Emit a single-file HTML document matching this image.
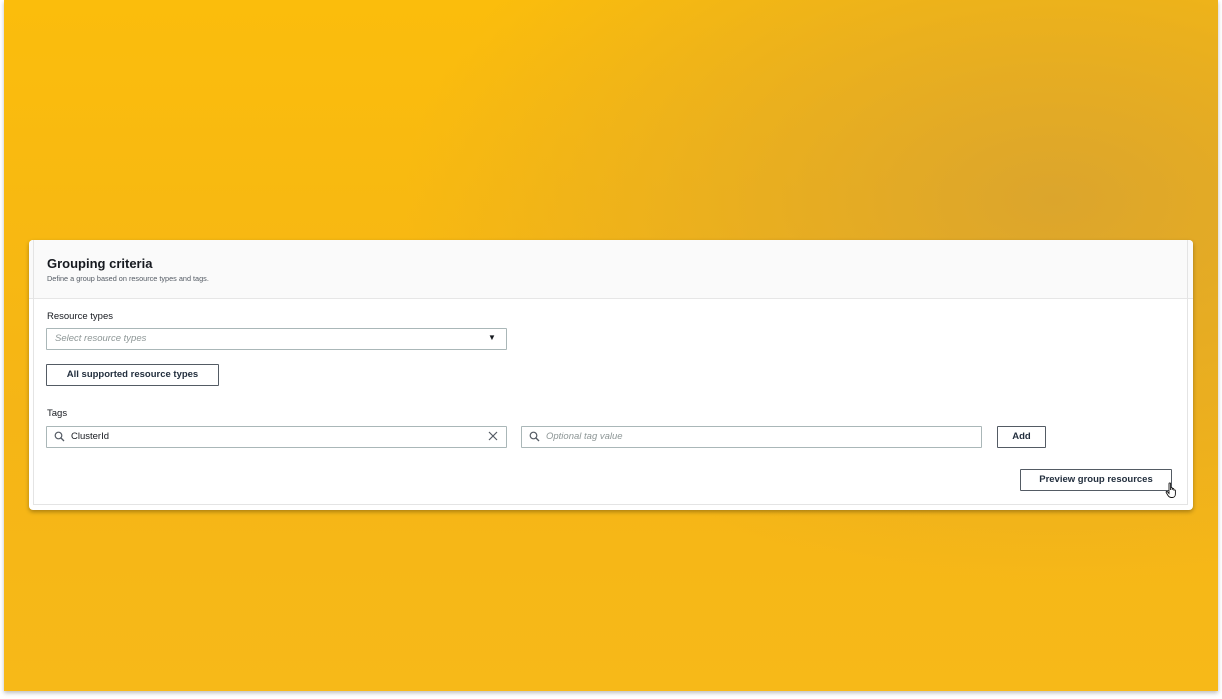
<!DOCTYPE html><html><head><style>
body{margin:0;width:1222px;height:699px;background:#fff;position:relative;overflow:hidden;font-family:"Liberation Sans",sans-serif;color:#16191f}
.bg{position:absolute;left:4px;top:0;width:1214px;height:691px;background:radial-gradient(ellipse 650px 380px at 1050px 200px,rgba(218,164,46,.95),rgba(220,167,46,0) 100%),linear-gradient(180deg,#fbbd0c 0%,#f5b516 60%,#f7b918 100%);box-shadow:0 2px 4px rgba(0,0,0,.25)}
.card{position:absolute;left:29px;top:240px;width:1164px;height:270px;background:#fff;border-radius:4px;box-shadow:0 2px 4px rgba(0,0,0,.3)}
.in{position:absolute;left:4px;top:0;right:5px;bottom:5px;border:1px solid #e4e4e4;border-top:none}
.hd{position:absolute;left:0;top:0;right:0;height:58px;background:#fafafa;border-bottom:1px solid #e6e6e6;border-radius:4px 4px 0 0}
.a{position:absolute;white-space:nowrap}
.box{position:absolute;border:1px solid #aab7b8;height:19px;box-sizing:border-box;background:#fff;border-radius:1px}
.btn{position:absolute;border:1px solid #545b64;box-sizing:border-box;height:21px;background:#fff;font-weight:bold;font-size:9.5px;text-align:center;line-height:19px;border-radius:1px;color:#232f3e}
.ph{font-style:italic;color:#8d9696;font-size:9.5px}
</style></head><body>
<div class="bg"></div>
<div class="card"><div class="hd"></div><div class="in"></div></div>
<div class="a" style="left:47px;top:256px;font-size:13px;font-weight:bold">Grouping criteria</div>
<div class="a" style="left:47px;top:274px;font-size:7.3px;color:#545b64">Define a group based on resource types and tags.</div>
<div class="a" style="left:47px;top:311px;font-size:9.5px">Resource types</div>
<div class="box" style="left:46px;top:328px;width:461px;height:22px"></div>
<div class="a ph" style="left:55px;top:333px">Select resource types</div>
<div class="a" style="left:488px;top:333px;font-size:8px">▼</div>
<div class="btn" style="left:46px;top:364px;width:173px;height:22px;line-height:20px">All supported resource types</div>
<div class="a" style="left:47px;top:408px;font-size:9.5px">Tags</div>
<div class="box" style="left:46px;top:426px;width:461px;height:22px"></div>
<svg class="a" style="left:54px;top:431px" width="11" height="11" viewBox="0 0 11 11"><circle cx="4.5" cy="4.5" r="3.3" fill="none" stroke="#545b64" stroke-width="1.2"/><path d="M7 7l3 3" stroke="#545b64" stroke-width="1.3"/></svg>
<div class="a" style="left:71px;top:431px;font-size:9.5px">ClusterId</div>
<svg class="a" style="left:488px;top:431px" width="10" height="10"><path d="M1 1l8 8M9 1l-8 8" stroke="#545b64" stroke-width="1.2"/></svg>
<div class="box" style="left:521px;top:426px;width:461px;height:22px"></div>
<svg class="a" style="left:529px;top:431px" width="11" height="11" viewBox="0 0 11 11"><circle cx="4.5" cy="4.5" r="3.3" fill="none" stroke="#545b64" stroke-width="1.2"/><path d="M7 7l3 3" stroke="#545b64" stroke-width="1.3"/></svg>
<div class="a ph" style="left:546px;top:431px">Optional tag value</div>
<div class="btn" style="left:997px;top:426px;width:49px;height:22px;line-height:20px">Add</div>
<div class="btn" style="left:1020px;top:469px;width:152px;height:22px;line-height:20px">Preview group resources</div>
<svg class="a" style="left:1165px;top:482px" width="14" height="17" viewBox="0 0 14 17"><path d="M4 1.5c0-.8 1.6-.8 1.6 0V8V6c0-.8 1.6-.8 1.6 0v2V7c0-.8 1.6-.8 1.6 0v1.5c0-.8 1.6-.8 1.6 0V12c0 2-1.2 3.5-3 3.5H6c-1.5 0-2.3-1-3-2L1.2 10.5c-.5-.8.6-1.5 1.2-.8L4 11.5z" fill="#fff" stroke="#111" stroke-width="0.9"/></svg>
</body></html>
